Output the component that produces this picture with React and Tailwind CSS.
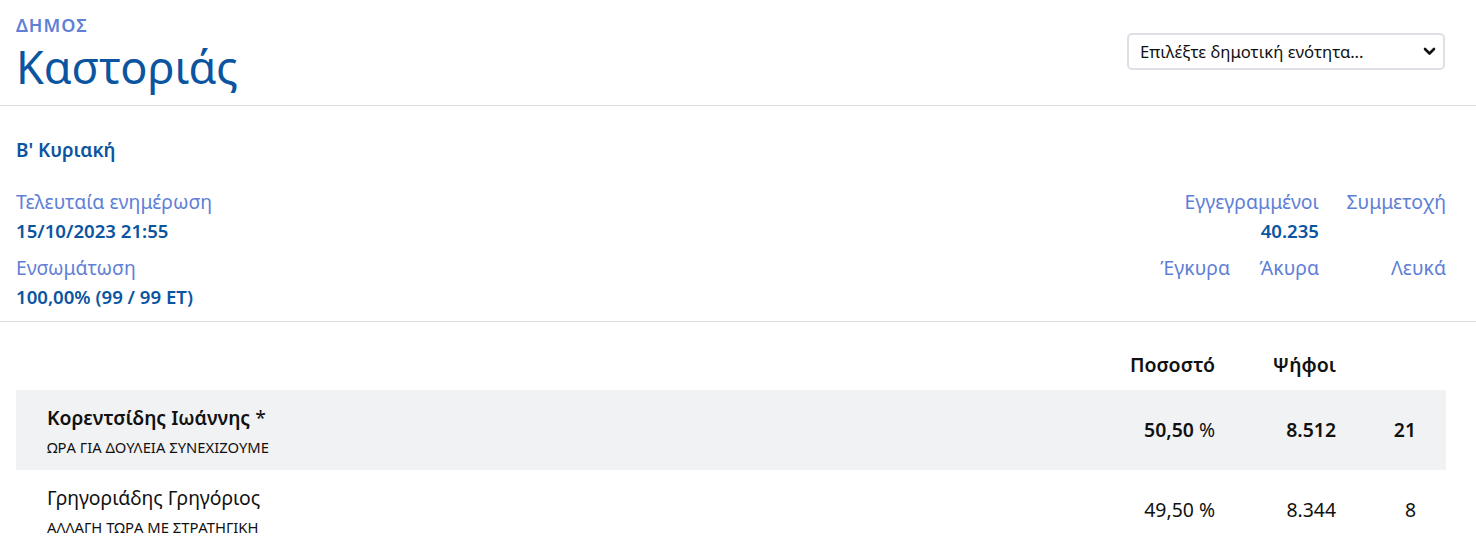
import React from 'react';

const candidates = [
  { name: 'Κορεντσίδης Ιωάννης', star: true, party: 'ΩΡΑ ΓΙΑ ΔΟΥΛΕΙΑ ΣΥΝΕΧΙΖΟΥΜΕ', pct: '50,50', votes: '8.512', seats: '21', lead: true },
  { name: 'Γρηγοριάδης Γρηγόριος', party: 'ΑΛΛΑΓΗ ΤΩΡΑ ΜΕ ΣΤΡΑΤΗΓΙΚΗ', pct: '49,50', votes: '8.344', seats: '8' },
];

const Label = ({ children, className = '' }) => (
  <div className={`text-[19.4px] leading-[28px] text-[#5f80d6] whitespace-nowrap ${className}`}>{children}</div>
);

const Value = ({ children, className = '' }) => (
  <div className={`text-[18.6px] leading-[30px] font-semibold text-[#0b55a0] whitespace-nowrap ${className}`}>{children}</div>
);

export default function App() {
  return (
    <div className="min-h-screen bg-white font-['Noto_Sans',sans-serif]">
      {/* κεφαλίδα */}
      <header className="flex items-start justify-between pl-4 pr-[31px] pt-[12px] pb-[9px] border-b border-[#dedfe2]">
        <div>
          <div className="text-[18px] leading-[26px] font-semibold tracking-[1px] text-[#5f80d6]">ΔΗΜΟΣ</div>
          <h1 className="text-[45px] leading-[58px] text-[#0b55a0]">Καστοριάς</h1>
        </div>
        <div className="relative mt-[21px]">
          <select className="appearance-none w-[318px] h-[37px] pl-[11px] pr-8 text-[16.7px] text-[#111] bg-white border-2 border-[#dde1e7] rounded-[5px]">
            <option>Επιλέξτε δημοτική ενότητα...</option>
          </select>
          <svg className="absolute right-[9px] top-[13px] pointer-events-none" width="13" height="10" viewBox="0 0 13 10">
            <path d="M2 3l4.5 4.5L11 3" fill="none" stroke="#111" strokeWidth="2.6" strokeLinecap="round" strokeLinejoin="round" />
          </svg>
        </div>
      </header>

      {/* στοιχεία */}
      <section className="pl-4 pr-[30px] pt-[30px] pb-[9px] border-b border-[#dedfe2]">
        <div className="text-[18.9px] leading-[28px] font-semibold text-[#0b55a0]">Β' Κυριακή</div>
        <div className="flex justify-between mt-[24px]">
          <div>
            <Label>Τελευταία ενημέρωση</Label>
            <Value>15/10/2023 21:55</Value>
            <Label className="mt-[8px]">Ενσωμάτωση</Label>
            <Value>100,00% (99 / 99 ΕΤ)</Value>
          </div>
          <div className="grid grid-cols-[89px_89px_127px] text-right">
            <Label className="col-span-2">Εγγεγραμμένοι</Label>
            <Label>Συμμετοχή</Label>
            <Value className="col-span-2">40.235</Value>
            <Value>&nbsp;</Value>
            <Label className="mt-[8px]">Έγκυρα</Label>
            <Label className="mt-[8px]">Άκυρα</Label>
            <Label className="mt-[8px]">Λευκά</Label>
            <Value className="col-span-3">&nbsp;</Value>
          </div>
        </div>
      </section>

      {/* αποτελέσματα */}
      <section className="pl-4 pr-[30px] pt-[24px]">
        <div className="flex items-center h-[38px] mb-[6px] pr-[30px] text-[19.5px] font-[580] text-[#111]">
          <div className="flex-1" />
          <div className="w-[120px] text-right">Ποσοστό</div>
          <div className="w-[121px] text-right">Ψήφοι</div>
          <div className="w-[80px]" />
        </div>
        {candidates.map((c) => (
          <div
            key={c.name}
            className={`flex h-[80px] pl-[31px] pr-[30px] text-[#111] ${c.lead ? 'bg-[#f1f2f4]' : ''}`}
          >
            <div className="flex-1 pt-[14px]">
              <div className={`text-[19.4px] leading-[28px] ${c.lead ? 'font-[580]' : ''}`}>
                {c.name}
                {c.star && <span className="font-normal"> *</span>}
              </div>
              <div className="text-[14.8px] leading-[30px]">{c.party}</div>
            </div>
            <div className="w-[120px] self-center text-right text-[19.4px]">
              <span className={c.lead ? 'font-[580]' : ''}>{c.pct}</span> %
            </div>
            <div className={`w-[121px] self-center text-right text-[19.4px] ${c.lead ? 'font-[580]' : ''}`}>{c.votes}</div>
            <div className={`w-[80px] self-center text-right text-[19.4px] ${c.lead ? 'font-[580]' : ''}`}>{c.seats}</div>
          </div>
        ))}
      </section>
    </div>
  );
}
